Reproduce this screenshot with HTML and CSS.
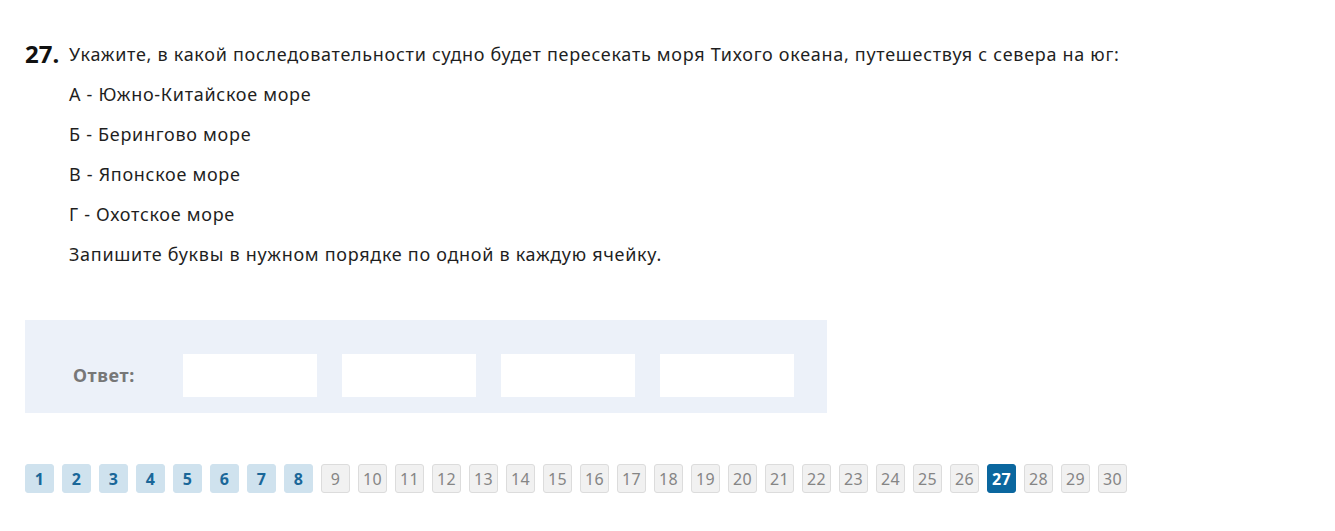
FILE: index.html
```html
<!DOCTYPE html>
<html lang="ru">
<head>
<meta charset="utf-8">
<link rel="stylesheet" href="styles.css">
</head>
<body>
<div class="page">
  <div class="question">
    <div class="num">27.</div>
    <div class="qbody">
      <p class="line">Укажите, в какой последовательности судно будет пересекать моря Тихого океана, путешествуя с севера на юг:</p>
      <p class="line">А - Южно-Китайское море</p>
      <p class="line">Б - Берингово море</p>
      <p class="line">В - Японское море</p>
      <p class="line">Г - Охотское море</p>
      <p class="line">Запишите буквы в нужном порядке по одной в каждую ячейку.</p>
    </div>
  </div>
  <div class="answer">
    <div class="label">Ответ:</div>
    <div class="cell"></div>
    <div class="cell"></div>
    <div class="cell"></div>
    <div class="cell"></div>
  </div>
  <div class="pager">
    <span class="pg done">1</span><span class="pg done">2</span><span class="pg done">3</span><span class="pg done">4</span><span class="pg done">5</span><span class="pg done">6</span><span class="pg done">7</span><span class="pg done">8</span><span class="pg">9</span><span class="pg">10</span><span class="pg">11</span><span class="pg">12</span><span class="pg">13</span><span class="pg">14</span><span class="pg">15</span><span class="pg">16</span><span class="pg">17</span><span class="pg">18</span><span class="pg">19</span><span class="pg">20</span><span class="pg">21</span><span class="pg">22</span><span class="pg">23</span><span class="pg">24</span><span class="pg">25</span><span class="pg">26</span><span class="pg current">27</span><span class="pg">28</span><span class="pg">29</span><span class="pg">30</span>
  </div>
</div>
</body>
</html>
```
FILE: styles.css
```css
html, body { margin: 0; padding: 0; background: #fff; }
body { font-family: "Noto Sans", "Open Sans", sans-serif; color: #222; }
.page { padding: 34px 25px 0 25px; }
.question { display: flex; }
.num { width: 44px; font-weight: 700; font-size: 24px; line-height: 40px; color: #111; }
.qbody { flex: 1; }
.line { margin: 0; font-size: 18px; line-height: 40px; letter-spacing: 0.7px; color: #1f1f1f; }
.answer { margin-top: 46px; width: 802px; height: 93px; box-sizing: border-box; background: #ecf1f9; display: flex; align-items: flex-start; padding: 34px 0 0 48px; gap: 25px; }
.label { width: 85px; height: 43px; line-height: 43px; font-weight: 700; font-size: 18px; letter-spacing: 0.6px; color: #777; }
.cell { width: 134px; height: 43px; background: #fff; }
.pager { margin-top: 51px; display: flex; gap: 8px; }
.pg { width: 29px; height: 29px; box-sizing: border-box; border: 1px solid #dcdcdc; border-radius: 3px; background: #f1f1f1; color: #858585; font-size: 16px; font-weight: 400; letter-spacing: 0.3px; display: flex; align-items: center; justify-content: center; }
.pg.done { background: #cfe2ee; border-color: #cfe2ee; color: #1a6799; font-weight: 700; }
.pg.current { background: #0b679f; border-color: #0b679f; color: #fff; font-weight: 700; }
```
